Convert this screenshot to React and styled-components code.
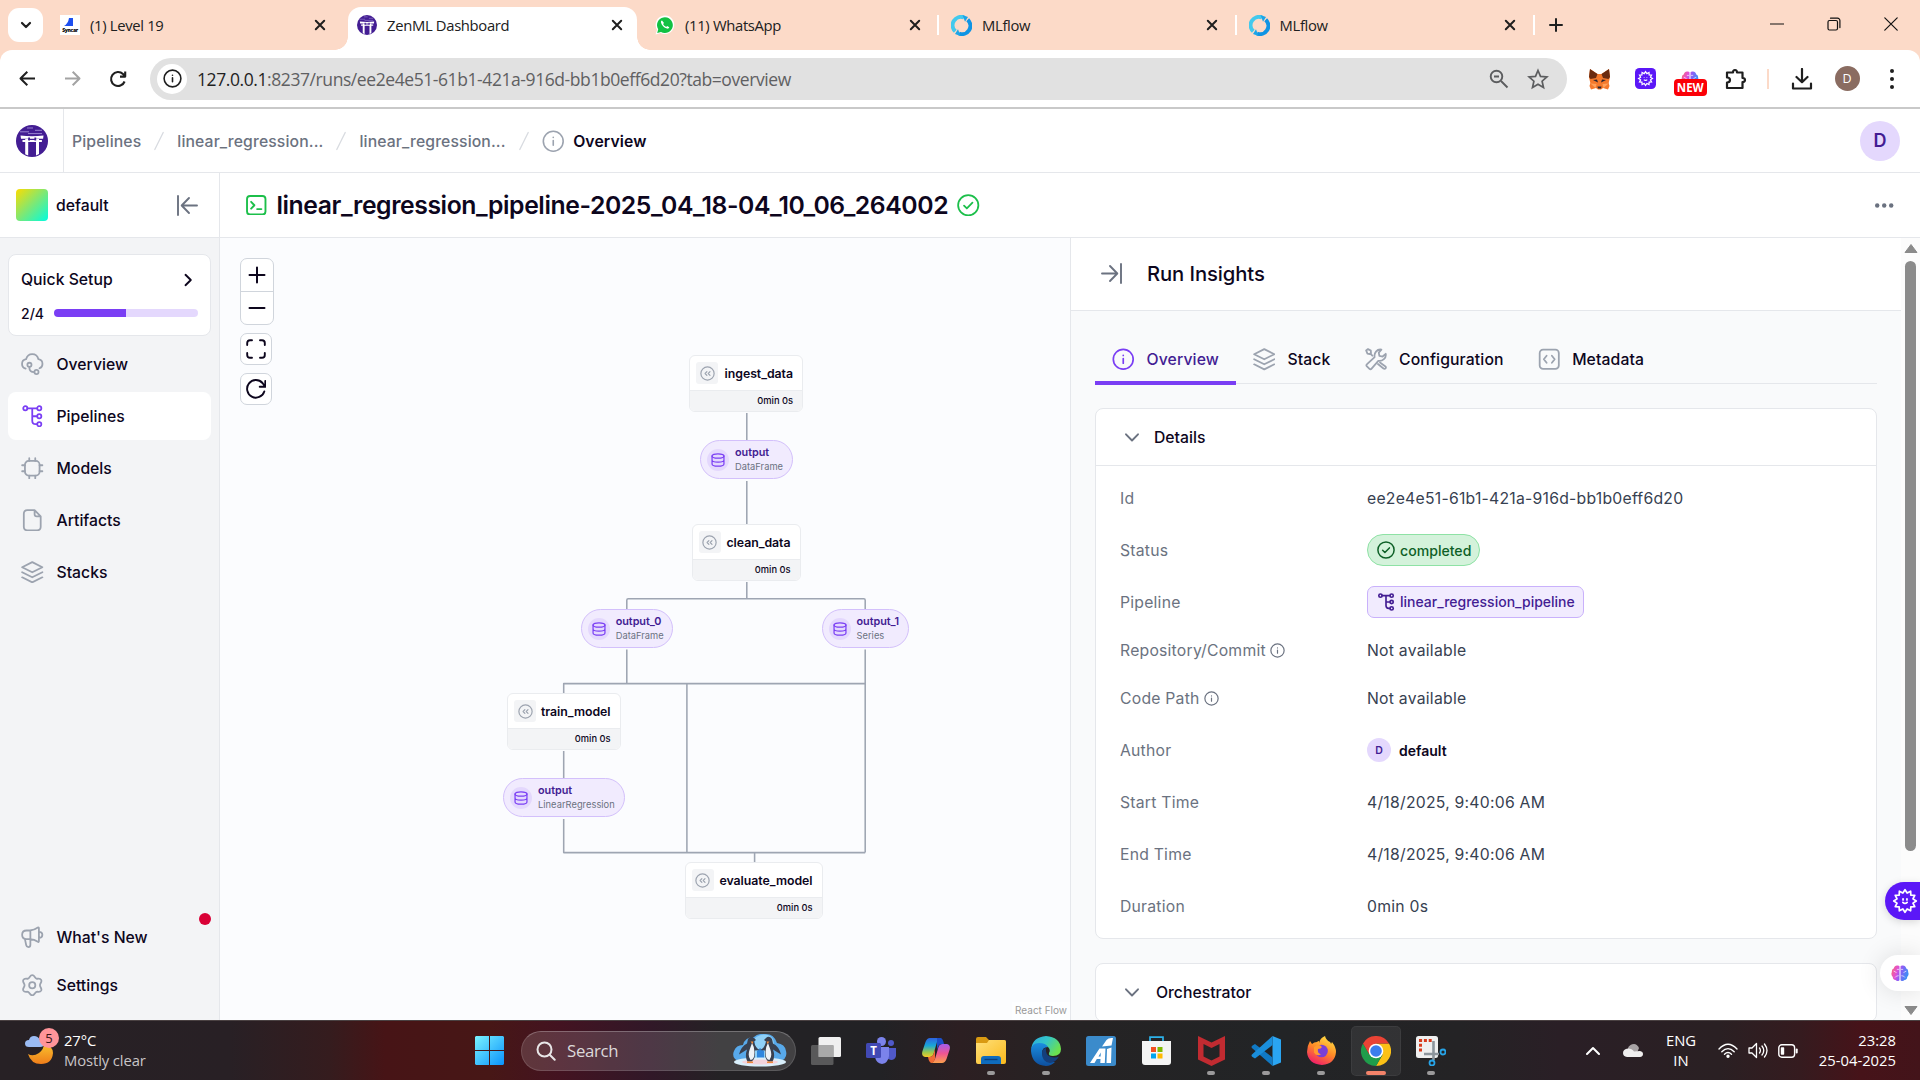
import React from 'react';
import styled, { createGlobalStyle, css } from 'styled-components';

const ui = `Inter, "Liberation Sans", sans-serif`;
const sys = `"Open Sans", "Noto Sans", sans-serif`;

const c = {
  ink: '#0d061d',
  text: '#374151',
  muted: '#6b7280',
  icon: '#9ca3af',
  line: '#e5e7eb',
  purple: '#7a3ef4',
  deep: '#431d93',
  lilac: '#e4d8fd',
  pale: '#f1ebfe',
  green: '#1cbf4a',
};

const Global = createGlobalStyle`
  *, *::before, *::after { box-sizing: border-box; }
  body { margin: 0; overflow: hidden; background: #fff; }
  svg { display: block; flex: none; }
`;

const Screen = styled.div`
  width: 1920px;
  height: 1080px;
  display: flex;
  flex-direction: column;
  overflow: hidden;
  font-family: ${ui};
  color: ${c.ink};
`;

/* ---------- Browser chrome ---------- */
const TabStrip = styled.div`
  height: 50px;
  flex: none;
  display: flex;
  background: #fcdac8;
  font-family: ${sys};
`;
const TabSearch = styled.div`
  width: 35px;
  height: 34px;
  margin: 8px 5px 0 8px;
  border-radius: 11px;
  background: #fff;
  display: grid;
  place-items: center;
`;
const Tab = styled.div`
  position: relative;
  width: ${(p) => p.$w || 297.5}px;
  height: 50px;
  padding: 0 0 0 ${(p) => p.$pad || 12}px;
  display: flex;
  align-items: center;
  font-size: 14.8px;
  letter-spacing: -0.32px;
  color: #202020;
  span { flex: 1; margin-left: 10px; white-space: nowrap; }
  ${(p) =>
    p.$active &&
    css`
      width: 289px;
      margin: 7px 0 0;
      height: 43px;
      padding: 0 0 7px 9px;
      background: #fff;
      border-radius: 13px 13px 0 0;
      &::before, &::after {
        content: '';
        position: absolute;
        bottom: 0;
        width: 13px;
        height: 13px;
      }
      &::before { left: -13px; background: radial-gradient(circle at 0 0, transparent 12.5px, #fff 13px); }
      &::after { right: -13px; background: radial-gradient(circle at 100% 0, transparent 12.5px, #fff 13px); }
    `}
`;
const TabClose = styled.div`
  width: 20px;
  height: 20px;
  margin-right: ${(p) => p.$r}px;
  display: grid;
  place-items: center;
`;
const TabSep = styled.div`
  width: 2px;
  height: 20px;
  margin: 15px 0 0 -2px;
  background: #fff;
`;
const NewTab = styled.div`
  width: 42px;
  display: grid;
  place-items: center;
`;
const WinButtons = styled.div`
  margin-left: auto;
  display: flex;
  padding-right: 1px;
  height: 48px;
`;
const WinButton = styled.div`
  width: 57px;
  display: grid;
  place-items: center;
`;

const ToolbarBack = styled.div`
  background: #fcdac8;
  flex: none;
`;
const Toolbar = styled.div`
  height: 59px;
  display: flex;
  align-items: center;
  background: #fff;
  border-radius: 12px 12px 0 0;
  border-bottom: 2px solid #c9c9c9;
  padding: 0 5px;
  font-family: ${sys};
`;
const ToolButton = styled.div`
  width: 45px;
  flex: none;
  display: grid;
  place-items: center;
`;
const AddressBar = styled.div`
  margin-left: 10px;
  width: 1417px;
  flex: none;
  height: 42px;
  border-radius: 21px;
  background: #e1e1e1;
  display: flex;
  align-items: center;
  padding: 0 18px 0 7px;
  gap: 18px;
`;
const SiteInfo = styled.div`
  width: 30px;
  height: 30px;
  border-radius: 50%;
  background: #fff;
  display: grid;
  place-items: center;
`;
const Url = styled.div`
  flex: 1;
  margin-left: -8px;
  font-size: 17.5px;
  letter-spacing: -0.42px;
  color: #5f6062;
  b { font-weight: 400; color: #1f1f1f; }
`;
const Extensions = styled.div`
  display: flex;
  align-items: center;
  margin-left: 10px;
`;
const NewBadge = styled.div`
  position: absolute;
  left: 6px;
  top: 22px;
  width: 33px;
  height: 17px;
  border-radius: 4px;
  background: #fb0007;
  color: #fff;
  font: 700 11.5px/17px ${sys};
  text-align: center;
`;
const ExtSlot = styled.div`
  position: relative;
  width: ${(p) => p.$w || 45.4}px;
  height: 44px;
  display: grid;
  place-items: center;
`;
const ToolDivider = styled.div`
  width: 2px;
  height: 20px;
  background: #fcdac8;
`;
const ProfileDot = styled.div`
  width: 25px;
  height: 25px;
  border-radius: 50%;
  background: #8a6c61;
  color: #fff;
  font-size: 12.5px;
  line-height: 25px;
  text-align: center;
`;

/* ---------- App header ---------- */
const AppHeader = styled.header`
  height: 64px;
  flex: none;
  display: flex;
  align-items: center;
  border-bottom: 1px solid ${c.line};
  background: #fff;
`;
const LogoCell = styled.div`
  width: 64px;
  height: 63px;
  border-right: 1px solid ${c.line};
  display: flex;
  align-items: center;
  padding-left: 16px;
`;
const Crumbs = styled.nav`
  display: flex;
  align-items: center;
  margin-left: 8px;
  padding-top: 1px;
  gap: 13px;
  font-size: 15.75px;
  font-weight: 500;
  letter-spacing: 0.12px;
  color: ${c.muted};
`;
const CurrentCrumb = styled.span`
  display: flex;
  align-items: center;
  gap: 9px;
  font-weight: 600;
  color: ${c.ink};
`;
const Avatar = styled.div`
  width: ${(p) => p.$size}px;
  height: ${(p) => p.$size}px;
  margin-left: ${(p) => (p.$push ? 'auto' : 0)};
  margin-right: ${(p) => (p.$push ? 20 : 0)}px;
  border-radius: 50%;
  background: ${c.lilac};
  color: ${c.deep};
  display: grid;
  place-items: center;
  font-size: ${(p) => p.$font}px;
  font-weight: 600;
`;

/* ---------- Body ---------- */
const Body = styled.div`
  height: 847px;
  flex: none;
  display: flex;
`;
const Sidebar = styled.aside`
  width: 220px;
  border-right: 1px solid ${c.line};
  background: #f3f4f6;
  display: flex;
  flex-direction: column;
`;
const Workspace = styled.div`
  height: 65px;
  background: #fff;
  border-bottom: 1px solid ${c.line};
  display: flex;
  align-items: center;
  padding: 0 21px 0 16px;
  font-size: 15.75px;
  font-weight: 500;
  span { flex: 1; margin-left: 8px; }
`;
const Swatch = styled.div`
  width: 32px;
  height: 32px;
  border-radius: 4px;
  background: linear-gradient(135deg, #fddc00 0%, #7ee874 50%, #00fce0 100%);
`;
const SetupCard = styled.div`
  margin: 16px 8px 4px;
  height: 82px;
  border: 1px solid ${c.line};
  border-radius: 8px;
  background: #fff;
  padding: 11px 12px 0;
  font-size: 15.75px;
  font-weight: 500;
`;
const SetupRow = styled.div`
  display: flex;
  align-items: center;
  justify-content: space-between;
  height: ${(p) => p.$h}px;
  padding-right: ${(p) => p.$pr || 0}px;
  margin-bottom: ${(p) => p.$mb || 0}px;
  font-size: ${(p) => p.$font || 15.75}px;
`;
const Progress = styled.div`
  width: 144px;
  height: 8px;
  border-radius: 4px;
  overflow: hidden;
  background: linear-gradient(90deg, ${c.purple} 50%, ${c.lilac} 50%);
`;
const NavList = styled.nav`
  display: flex;
  flex-direction: column;
  gap: 4px;
  padding: 0 8px;
`;
const NavItem = styled.div`
  position: relative;
  height: ${(p) => p.$h || 48}px;
  border-radius: 8px;
  display: flex;
  align-items: center;
  gap: 13px;
  padding-left: 13px;
  font-size: 15.75px;
  font-weight: 500;
  background: ${(p) => (p.$active ? '#fff' : 'transparent')};
  svg { color: ${(p) => (p.$active ? c.purple : c.icon)}; }
`;
const NavFoot = styled(NavList)`
  margin-top: auto;
  gap: 0;
  padding-bottom: 11px;
`;
const AlertDot = styled.i`
  position: absolute;
  right: 0;
  top: 0;
  width: 12px;
  height: 12px;
  border-radius: 50%;
  background: #d90036;
`;

const Main = styled.main`
  width: 1700px;
  display: flex;
  flex-direction: column;
`;
const TitleBar = styled.div`
  height: 65px;
  flex: none;
  display: flex;
  align-items: center;
  padding: 0 26px;
  border-bottom: 1px solid ${c.line};
  background: #fff;
`;
const Title = styled.h1`
  margin: -1px 9px 0 10px;
  font-size: 24.75px;
  line-height: 30px;
  font-weight: 600;
  letter-spacing: -0.42px;
`;
const Push = styled.div`
  margin-left: auto;
`;
const Split = styled.div`
  flex: 1;
  display: flex;
  min-height: 0;
`;

/* ---------- Pipeline canvas ---------- */
const Canvas = styled.section`
  position: relative;
  width: 850px;
  background: #fbfcfe;
  overflow: hidden;
`;
const Edges = styled.svg`
  position: absolute;
  inset: 0;
`;
const Controls = styled.div`
  position: absolute;
  left: 20px;
  top: 20px;
  display: flex;
  flex-direction: column;
  align-items: flex-start;
  gap: 8px;
`;
const ControlGroup = styled.div`
  border: 1px solid #d0d5dc;
  border-radius: 7px;
  background: #fff;
  overflow: hidden;
`;
const Control = styled.div`
  width: ${(p) => p.$s}px;
  height: ${(p) => p.$s}px;
  display: grid;
  place-items: center;
  & + & { border-top: 1px solid #d0d5dc; height: 33px; }
`;
const StepNode = styled.div`
  position: absolute;
  left: ${(p) => p.$x - 220}px;
  top: ${(p) => p.$y - 238}px;
  width: ${(p) => p.$w}px;
  height: 57px;
  border: 1px solid #eaecef;
  border-radius: 6px;
  background: #fff;
  overflow: hidden;
`;
const StepHead = styled.div`
  height: 35px;
  display: flex;
  align-items: center;
  padding: 0 9px 0 6px;
  justify-content: space-between;
  font-size: 12.3px;
  font-weight: 600;
  letter-spacing: -0.03px;
  border-bottom: 1px solid #eaecef;
`;
const StepIcon = styled.div`
  width: 22px;
  height: 22px;
  border-radius: 3px;
  background: #f3f4f6;
  display: grid;
  place-items: center;
`;
const StepTime = styled.div`
  height: 20px;
  background: #f3f4f6;
  padding-right: 9px;
  text-align: right;
  font-size: 9.3px;
  line-height: 20px;
  font-weight: 500;
`;
const ArtifactNode = styled.div`
  position: absolute;
  left: ${(p) => p.$x - 220}px;
  top: ${(p) => p.$y - 238}px;
  width: ${(p) => p.$w}px;
  height: 39px;
  border: 1px solid #d3c0fb;
  border-radius: 20px;
  background: ${c.pale};
  display: flex;
  align-items: center;
  gap: 6px;
  padding-left: 6px;
`;
const ArtifactIcon = styled.div`
  width: 22px;
  height: 22px;
  border-radius: 50%;
  background: ${c.lilac};
  color: ${c.purple};
  display: grid;
  place-items: center;
`;
const ArtifactText = styled.div`
  display: flex;
  flex-direction: column;
  font-size: 10.85px;
  line-height: 15px;
  font-weight: 600;
  letter-spacing: -0.04px;
  color: ${c.deep};
  margin-top: -1px;
  small { font-size: 9.3px; line-height: 14px; font-weight: 400; letter-spacing: 0.03px; color: ${c.muted}; }
`;
const Attribution = styled.div`
  position: absolute;
  right: 0;
  bottom: 0;
  padding: 2px 3px 4px;
  background: rgba(255, 255, 255, 0.5);
  font-size: 10px;
  line-height: 12px;
  color: #999;
`;

/* ---------- Insights panel ---------- */
const Panel = styled.section`
  width: 831px;
  border-left: 1px solid ${c.line};
  background: #f9fafb;
  overflow: hidden;
`;
const PanelHead = styled.div`
  height: 73px;
  background: #fff;
  border-bottom: 1px solid ${c.line};
  display: flex;
  align-items: center;
  gap: 25px;
  padding: 0 0 1px 30px;
  font-size: 20.25px;
  font-weight: 500;
  letter-spacing: -0.1px;
`;
const PanelTabs = styled.div`
  margin: 36px 24px 24px;
  height: 37px;
  border-bottom: 1px solid ${c.line};
  display: flex;
`;
const PanelTab = styled.div`
  height: 38px;
  display: flex;
  align-items: flex-start;
  gap: 12px;
  padding: 1px 17px 0;
  font-size: 15.75px;
  line-height: 24px;
  font-weight: 500;
  letter-spacing: 0.12px;
  color: ${(p) => (p.$active ? c.deep : c.ink)};
  border-bottom: 4px solid ${(p) => (p.$active ? c.purple : 'transparent')};
  svg { color: ${(p) => (p.$active ? c.purple : c.icon)}; }
`;
const Card = styled.div`
  margin: 0 24px 24px;
  border: 1px solid ${c.line};
  border-radius: 8px;
  background: #fff;
`;
const CardHead = styled.div`
  height: 57px;
  display: flex;
  align-items: center;
  gap: ${(p) => p.$gap || 14}px;
  padding-left: 28px;
  border-bottom: 1px solid ${c.line};
  font-size: 15.75px;
  font-weight: 500;
`;
const Fields = styled.dl`
  margin: 0;
  padding: 6px 0 6px 24px;
`;
const Field = styled.div`
  height: ${(p) => p.$h || 52}px;
  display: flex;
  align-items: center;
  font-size: 15.75px;
`;
const Label = styled.dt`
  width: 247px;
  display: flex;
  align-items: center;
  gap: 4px;
  letter-spacing: 0.22px;
  color: ${c.muted};
`;
const Value = styled.dd`
  margin: 0;
  display: flex;
  align-items: center;
  letter-spacing: 0.24px;
  color: ${c.text};
`;
const Status = styled.div`
  height: 32px;
  display: flex;
  align-items: center;
  gap: 5px;
  padding: 0 8px 0 9px;
  border: 1px solid #8ee2a5;
  border-radius: 16px;
  background: #d4f2db;
  color: #0e6027;
  font-size: 14.1px;
  font-weight: 500;
  letter-spacing: 0;
`;
const Chip = styled.div`
  height: 32px;
  display: flex;
  align-items: center;
  gap: 5px;
  padding: 0 8px 1px 9px;
  border: 1px solid #c9b1fb;
  border-radius: 7px;
  background: ${c.pale};
  color: ${c.deep};
  font-size: 14px;
  font-weight: 500;
  letter-spacing: 0;
`;
const Author = styled.div`
  display: flex;
  align-items: center;
  gap: 8px;
  font-size: 14px;
  font-weight: 600;
  letter-spacing: 0;
  color: ${c.ink};
`;
const Scrollbar = styled.div`
  width: 19px;
  background: #fcfcfc;
  display: flex;
  flex-direction: column;
  align-items: center;
  padding: 6px 0 5px;
`;
const Thumb = styled.div`
  width: 11px;
  height: 590px;
  margin: 8px 0 auto;
  border-radius: 6px;
  background: #8b8b8b;
`;
const Floating = styled.div`
  position: absolute;
  right: 0;
  top: ${(p) => p.$y}px;
  width: ${(p) => p.$w}px;
  height: ${(p) => p.$h}px;
  border-radius: 19px 0 0 19px;
  background: ${(p) => p.$bg};
  box-shadow: ${(p) => p.$shadow};
  display: flex;
  align-items: center;
  padding-left: ${(p) => p.$pad}px;
`;

/* ---------- Taskbar ---------- */
const Taskbar = styled.footer`
  position: relative;
  height: 60px;
  flex: none;
  display: flex;
  align-items: center;
  border-top: 1px solid #4a4142;
  background: linear-gradient(90deg, #272125 0, #282025 230px, #351c1e 330px, #471416 385px, #471716 490px, #431321 560px, #311828 650px, #242225 720px, #222225 880px, #2c1f22 960px, #252324 1080px, #222426 1280px, #242325 1460px, #2a1f26 1560px, #2a2023 1720px, #351b1f 1800px, #461319 1860px, #43141a 1920px);
  font-family: ${sys};
  color: #fff;
`;
const Weather = styled.div`
  position: relative;
  width: 450px;
  display: flex;
  align-items: center;
  padding-left: 24px;
  gap: 6px;
`;
const WeatherCount = styled.div`
  position: absolute;
  left: 39px;
  top: -3px;
  width: 20px;
  height: 20px;
  border-radius: 50%;
  background: #ff9499;
  color: #3a1518;
  font-size: 13px;
  line-height: 20px;
  text-align: center;
`;
const TwoLines = styled.div`
  font-size: 14.8px;
  line-height: 20.3px;
  letter-spacing: ${(p) => p.$ls || 0}px;
  text-align: ${(p) => p.$align || 'left'};
  white-space: nowrap;
  margin-top: -1px;
  span { display: block; color: ${(p) => p.$second || '#fff'}; }
`;
const StartSlot = styled.div`
  width: 71px;
  padding-left: 25px;
`;
const SearchBox = styled.div`
  width: 275px;
  height: 40px;
  border-radius: 20px;
  border: 1px solid rgba(255, 255, 255, 0.13);
  border-top-color: rgba(255, 255, 255, 0.26);
  background: rgba(255, 255, 255, 0.14);
  display: flex;
  align-items: center;
  padding: 0 8px 0 14px;
  font-size: 16.8px;
  color: #dcd9da;
  span { flex: 1; margin-left: 11px; letter-spacing: -0.3px; }
`;
const Apps = styled.div`
  display: flex;
  margin-left: 5px;
  gap: 5px;
`;
const AppSlot = styled.div`
  position: relative;
  width: 50px;
  height: 50px;
  border-radius: 5px;
  display: grid;
  place-items: center;
  ${(p) => p.$current && css`background: rgba(255, 255, 255, 0.07); box-shadow: inset 0 0 0 1px rgba(255, 255, 255, 0.05);`}
  ${(p) =>
    p.$open &&
    css`
      &::after {
        content: '';
        position: absolute;
        left: ${p.$current ? 15 : 21}px;
        bottom: 1px;
        width: ${p.$current ? 20 : 8}px;
        height: 4px;
        border-radius: 2px;
        background: ${p.$current ? '#f3836a' : '#9b9a9b'};
      }
    `}
`;
const Tray = styled.div`
  margin-left: auto;
  display: flex;
  align-items: center;
  padding-right: 24px;
`;
const TraySlot = styled.div`
  width: ${(p) => p.$w}px;
  display: grid;
  align-items: center;
  justify-items: ${(p) => (p.$end ? 'end' : 'center')};
`;

/* ---------- Icons ---------- */
const Line = ({ s = 22.5, w = 2, children, color = 'currentColor', vb = '0 0 24 24', h }) => (
  <svg width={s} height={h || s} viewBox={vb} fill="none" stroke={color} strokeWidth={w} strokeLinecap="round" strokeLinejoin="round">
    {children}
  </svg>
);
const InfoIcon = ({ s, w = 1.8, color }) => (
  <Line s={s} w={w} color={color}>
    <circle cx="12" cy="12" r="10.6" />
    <path d="M12 11.2v5M12 7.8v.1" />
  </Line>
);
const PipelineIcon = ({ s, w = 1.9 }) => (
  <Line s={s} w={w}>
    <circle cx="4.6" cy="3.5" r="2.2" />
    <circle cx="19.5" cy="3.5" r="2.2" />
    <circle cx="19.5" cy="12" r="2.2" />
    <circle cx="19.5" cy="20.5" r="2.2" />
    <path d="M6.8 3.5h10.5M12 3.5v13.3c0 2.6 1.1 3.7 3.7 3.7h1.6M12 12h5.3" />
  </Line>
);
const CloudIcon = () => (
  <Line w={1.9}>
    <path d="M5 16.6C2.6 15.9 1.1 14 1.1 11.6c0-2.6 1.8-4.6 4.3-5C6.3 3.5 8.9 1.3 12 1.3s5.8 2.2 6.6 5.3c2.5.4 4.3 2.4 4.3 5 0 2.2-1.3 4-3.2 4.700" />
    <circle cx="9" cy="12.6" r="2.2" />
    <circle cx="16.5" cy="20.3" r="2.2" />
    <path d="M9 14.8v1.400c0 2.800 1.300 4.100 5.300 4.100" />
  </Line>
);
const ChipIcon = () => (
  <Line w={1.9}>
    <rect x="4.2" y="4.2" width="15.6" height="15.6" rx="4" />
    <path d="M8.8 1.200v3M15.200 1.200v3M8.800 19.800v3M15.200 19.800v3M1.200 8.800h3M1.200 15.200h3M19.800 8.800h3M19.800 15.200h3" />
  </Line>
);
const FileIcon = () => (
  <Line w={1.9}>
    <path d="M14.500 1.300H6.800C4.100 1.300 3 2.400 3 5.100v13.800c0 2.700 1.100 3.800 3.800 3.800h10.400c2.700 0 3.800-1.100 3.800-3.800V7.800zM14.500 1.300v4.200c0 1.600.7 2.300 2.300 2.300H21" />
  </Line>
);
const LayersIcon = ({ w = 1.9, s }) => (
  <Line w={w} s={s}>
    <path d="M12 1.200 22.800 6.600 12 12 1.200 6.600zM1.200 12 12 17.400 22.800 12M1.200 17.400 12 22.800l10.800-5.400" />
  </Line>
);
const MegaphoneIcon = () => (
  <Line w={1.9}>
    <path d="M9.500 4.800H6c-3 0-4.800 1.800-4.800 4.600S3 14 6 14h3.500c3 .2 6 1.200 8.500 2.900.6.400 1.100.1 1.100-.6V2.300c0-.7-.5-1-1.100-.6-2.500 1.800-5.500 2.900-8.500 3.100zM10 4.800V20c0 1.600-.8 2.500-2.200 2.500-1.300 0-2-.8-2.300-2.200L4.200 14M19.200 6.200c2.300 0 3.600 1.200 3.600 3.200s-1.300 3.300-3.600 3.300" />
  </Line>
);
const GearIcon = () => (
  <Line w={1.9}>
    <circle cx="12" cy="12" r="3.3" />
    <path d="M12 1.200c2.500 0 2.600 3 4.500 3.700 1.600.6 3.700-.8 5 1.400 1.200 2.200-1.300 3.600-1.300 5.700s2.500 3.500 1.300 5.700c-1.300 2.200-3.400.8-5 1.400-1.900.7-2 3.700-4.500 3.700s-2.600-3-4.500-3.700c-1.600-.6-3.700.8-5-1.400C1.300 15.500 3.800 14.100 3.800 12S1.300 8.500 2.500 6.300c1.300-2.200 3.400-.8 5-1.400C9.400 4.200 9.500 1.200 12 1.200z" />
  </Line>
);
const ToolsIcon = () => (
  <Line w={1.9}>
    <path d="m4.800 22.300-3-3c-.5-.5-.5-1.300.1-1.800l8.400-7.800C9.300 5.500 12.700.9 17.500 1.700L14.700 5l.6 3.500 3.500.6 3.300-2.900c.9 4.600-3.400 8.200-7.900 7.500l-7.400 8.500c-.5.600-1.400.6-2 .1z" />
    <path d="M7.800 8.200 5.500 5.800M1.200 2.600l2-1.500 3 1.700.2 3-1.300.7-2.500-.6zM16 15.500l5.800 4.200c.7.600.7 1.500.1 2.100-.6.700-1.600.7-2.200 0L13.800 17" />
  </Line>
);
const CodeIcon = () => (
  <Line w={1.9}>
    <rect x="1.8" y="1.8" width="20.4" height="20.4" rx="3.6" />
    <path d="m9.200 8.300-3 3.700 3 3.700M14.800 8.300l3 3.700-3 3.700" />
  </Line>
);
const CheckIcon = ({ s = 22.5, color, w = 1.9 }) => (
  <Line s={s} color={color} w={w}>
    <circle cx="12" cy="12" r="10.8" />
    <path d="m7.500 12.400 3 3 6-6.200" />
  </Line>
);
const DatabaseIcon = () => (
  <Line s={14} w={1.4} vb="0 0 16 16">
    <ellipse cx="8" cy="3.400" rx="6.800" ry="2.500" />
    <path d="M1.200 3.400v9.200c0 1.400 3 2.500 6.800 2.500s6.800-1.100 6.800-2.500V3.400M1.200 8c0 1.400 3 2.500 6.800 2.500s6.800-1.100 6.800-2.500" />
  </Line>
);
const CachedIcon = () => (
  <Line s={15} w={1.9} color={c.icon}>
    <circle cx="12" cy="12" r="10.6" />
    <path d="m11 9-2.800 3 2.800 3M16 9l-2.800 3 2.800 3" />
  </Line>
);
const CloseIcon = () => (
  <Line s={12} w={2} color="#1f1f1f" vb="0 0 12 12"><path d="m1.800 1.800 8.400 8.400M10.200 1.800l-8.400 8.400" /></Line>
);
const Chevron = ({ d = 'down' }) => (
  <Line s={16} w={1.9} color={d === 'down' ? c.muted : c.ink} vb="0 0 16 16">
    <path d={d === 'down' ? 'M2 5.300 8 11.500 14 5.300' : 'M5.500 2.800 10.800 8l-5.300 5.200'} />
  </Line>
);
const ZenLogo = ({ s }) => (
  <svg width={s} height={s} viewBox="0 0 32 32">
    <circle cx="16" cy="16" r="16" fill="#431d93" />
    <path d="M4.500 10.500q11.500 1.500 23 0l-.4 3.200H5zM6.500 15h19.400v2H6.500zM9.200 14h3v16.500l-3-1.300zM20 14h3v15l-3 1.500z" fill="#fff" />
    <path d="M12.200 12.500h1.800v3h-1.800zM18.400 12.500h1.800v3h-1.800z" fill="#431d93" />
    <path d="M4 6.800h9M19 5.300h7M11 3h6M12 8.600h14" stroke="#a38fd6" strokeWidth=".9" />
  </svg>
);
const MlflowLogo = () => (
  <svg width="21" height="21" viewBox="0 0 21 21" fill="none" strokeWidth="4">
    <path d="M4.300 16.300A8.300 8.300 0 0 1 13 2.500" stroke="#43c9ed" />
    <path d="M16.700 4.700A8.300 8.300 0 0 1 8 18.500" stroke="#0f94e4" />
    <path d="m11.500 0 5.500 2-3 4.800zM9.500 21 4 19l3-4.800z" fill="#1ba5e8" />
  </svg>
);
const WhatsappLogo = () => (
  <svg width="20" height="20" viewBox="0 0 20 20">
    <path d="M.6 19.600 2 14.700A9.300 9.300 0 1 1 5.500 18z" fill="#fff" />
    <path d="m2.200 18 1-3.700a7.900 7.900 0 1 1 2.800 2.700z" fill="#12c143" />
    <path d="M7 5.500c-.8.300-1.200 1-1 2.100.6 2.900 3 5.400 6 6 1.200.2 2-.3 2.300-1.400l-2.200-1.300-1 1c-1.300-.5-2.300-1.500-3-2.800l.9-1z" fill="#fff" />
  </svg>
);
const SpeakerSiteLogo = () => (
  <svg width="20" height="20" viewBox="0 0 20 20">
    <path d="M0 0h20v20H0z" fill="#fff" />
    <path d="M9 3h4v8H4q2-1 3.500-3.500Q8.500 6 9 3z" fill="#1d4ff0" />
    <text x="10" y="16.500" textAnchor="middle" fontFamily="Open Sans" fontSize="5" fontWeight="800">Syncar</text>
  </svg>
);
const FoxIcon = () => (
  <svg width="21" height="22" viewBox="0 0 21 22">
    <path d="m1 1 7.500 5h4L20 1l1 8-1.300 6 .8 3-1.500 3.500-5-1.500-2 1.500H9L7 20l-5 1.500L.500 18l.8-3L0 9z" fill="#f5792c" />
    <path d="m1 1 7.500 5L7 10l-5.500 1L0 9zM20 1l-7.500 5L14 10l5.500 1L21 9z" fill="#6b2b10" />
    <path d="m4 12 4-.5 1 3zM17 12l-4-.5-1 3zM8.500 18.500h4l-.5 2H9z" fill="#2b2430" />
    <path d="m1.500 15.500 6 .5-1 4zM19.500 15.500l-6 .5 1 4z" fill="#ffa15a" />
  </svg>
);
const starburst = Array.from({ length: 24 }, (_, i) => {
  const r = i % 2 ? 7.6 : 10.4;
  const a = (i * Math.PI) / 12;
  return `${(12 + r * Math.sin(a)).toFixed(2)},${(12 - r * Math.cos(a)).toFixed(2)}`;
}).join(' ');
const BurstIcon = ({ s }) => (
  <svg width={s} height={s} viewBox="0 0 24 24" fill="none" stroke="#fff" strokeWidth="1.600" strokeLinejoin="round" strokeLinecap="round">
    <polygon points={starburst} />
    <path d="M10.200 10v1M13.800 10v1M10 13.300q2 2 4 0" />
  </svg>
);
const BrainIcon = ({ s }) => (
  <svg width={s} height={s} viewBox="0 0 20 20">
    <defs>
      <linearGradient id="brain" x1="0" y1="0" x2="1" y2="0.3">
        <stop offset="0" stopColor="#fb6a6a" /><stop offset=".4" stopColor="#e04fd8" /><stop offset=".6" stopColor="#8f5cf5" /><stop offset="1" stopColor="#3f8df5" />
      </linearGradient>
    </defs>
    <path d="M9.400 2.500v15.500Q7 20 5 17.800 2 17.500 2 14.500-.5 12 1 9q-.5-3 2-4 1-3.500 4-3.300 2-.1 2.400.8zM10.600 2.500v15.500Q13 20 15 17.800q3-.3 3-3.300 2.500-2.500 1-5.500.5-3-2-4-1-3.500-4-3.300-2-.1-2.400.8z" fill="url(#brain)" />
    <path d="M3 8q2 0 3 2M9 6H6.500M8.500 13q-3 0-4 2M17 8q-2 0-3 2M11 6h2.500M11.500 13q3 0 4 2" stroke="#fff" strokeWidth=".9" fill="none" opacity=".8" />
  </svg>
);

/* Taskbar icons */
const WindowsIcon = () => (
  <svg width="29" height="29" viewBox="0 0 29 29">
    <defs><linearGradient id="win" x1="0" y1="0" x2="29" y2="29" gradientUnits="userSpaceOnUse"><stop offset="0" stopColor="#7af3ff" /><stop offset="1" stopColor="#0a92fb" /></linearGradient></defs>
    <path d="M1 0h13v14H0V1zM15 0h13l1 1v13H15zM0 15h14v14H1l-1-1zM15 15h14v13l-1 1H15z" fill="url(#win)" />
  </svg>
);
const Penguins = () => (
  <svg width="54" height="33" viewBox="0 0 54 33">
    <path d="M6 28Q-2 24 1 17q2-6 9-6 2-8 11-8 4-4 12-3 8 0 11 9 8 1 9 8 2 8-7 11z" fill="#58a9ea" />
    <path d="M22 4q6-5 13-3 6 2 6 10l-8 15H22z" fill="#8fd0f7" />
    <path d="M24 17l3-3 4 3v7h-7z" fill="#2f86de" />
    <ellipse cx="27" cy="28" rx="26" ry="4.500" fill="#d9effb" />
    <ellipse cx="27" cy="28" rx="18" ry="2.500" fill="#f2d3dc" />
    <path d="M15 5q3-4 6-1l2 2-2 1.500q1.500 7 6 8.500l-5 .5q.5 9-3.500 11h-4q-3-5-.5-12l-8 5q2-8 8-11z" fill="#39404f" />
    <path d="M39 5q-3-4-6-1l-2 2 2 1.500q-1.500 7-6 8.500l5 .5q-.5 9 3.500 11h4q3-5 .5-12l8 5q-2-8-8-11z" fill="#39404f" />
    <path d="M19 9q2.500 4 2.500 9 0 8-4 8-3-4-1-10zM35 9q-2.500 4-2.500 9 0 8 4 8 3-4 1-10z" fill="#eef2f6" />
    <path d="M17.500 7.500l3 0-1 2.500zM36.500 7.500l-3 0 1 2.500zM14 27.500h6v1.500h-6zM34 27.500h6v1.500h-6z" fill="#ee8a3c" />
  </svg>
);
const TaskViewIcon = () => (
  <svg width="30" height="28" viewBox="0 0 30 28">
    <rect x="7.5" y="0" width="22.5" height="20" rx="1.500" fill="#f0f0f0" />
    <rect x="0" y="8" width="22.5" height="20" rx="1.500" fill="#6c6c6c" opacity=".75" />
    <path d="M7.500 8h15v12h-15z" fill="#a9a9a9" />
  </svg>
);
const TeamsIcon = () => (
  <svg width="30" height="27" viewBox="0 0 30 27">
    <circle cx="25" cy="6" r="3" fill="#5059c9" /><path d="M22 11h8v8q-1 4-5 4l-3-1z" fill="#5059c9" />
    <circle cx="15.500" cy="4.500" r="4.500" fill="#7b83eb" /><path d="M9 10h14v9q-1 7-7 8-6-1-7-7z" fill="#7b83eb" />
    <rect x="0" y="6" width="15" height="15" rx="1.500" fill="#4149b4" />
    <text x="7.500" y="17.500" fill="#fff" fontFamily="Open Sans" fontWeight="700" fontSize="11.500" textAnchor="middle">T</text>
  </svg>
);
const CopilotIcon = () => (
  <svg width="28" height="25" viewBox="0 0 28 25">
    <defs>
      <linearGradient id="cpa" x1="0" y1="0" x2="0" y2="1"><stop offset="0" stopColor="#2e62e0" /><stop offset=".4" stopColor="#18a6d8" /><stop offset=".75" stopColor="#9bc94d" /><stop offset="1" stopColor="#f5c928" /></linearGradient>
      <linearGradient id="cpb" x1="0" y1="0" x2="0" y2="1"><stop offset="0" stopColor="#a45cec" /><stop offset=".5" stopColor="#ee5593" /><stop offset="1" stopColor="#fba04c" /></linearGradient>
    </defs>
    <path d="M19 0q-3 1-4 4l-3.500 12q-1 3-4 3H3q-4-1-2.500-6l3-9Q5 0 8 0z" fill="url(#cpa)" />
    <path d="M9 25q3-1 4-4l3.500-12q1-3 4-3H25q4 1 2.500 6l-3 9q-1.500 4-4.500 4z" fill="url(#cpb)" />
    <path d="M15 0h4q2 1 3 6h-2q-3 0-4 3l-1 3z" fill="#1b4fc9" />
    <path d="M7.500 19q3 0 4-3l1.500-5v10q-1 3-3 4-3 0-4-6z" fill="#f06a35" />
  </svg>
);
const FolderIcon = () => (
  <svg width="30" height="27" viewBox="0 0 30 27">
    <path d="M0 2q0-2 2-2h8l3 3h15q2 0 2 2v8H0z" fill="#d99a12" />
    <defs><linearGradient id="fold" x1="0" y1="0" x2="1" y2="1"><stop offset="0" stopColor="#ffe07a" /><stop offset="1" stopColor="#fab91c" /></linearGradient></defs>
    <path d="M0 6h11l2-3h15q2 0 2 2v20q0 2-2 2H2q-2 0-2-2z" fill="url(#fold)" />
    <path d="M5 27v-5q0-3 3-3h14q3 0 3 3v5z" fill="#0f6cbd" /><path d="M8.500 22.500h13" stroke="#0a3f7c" strokeWidth="1.300" />
  </svg>
);
const EdgeIcon = () => (
  <svg width="30" height="30" viewBox="0 0 30 30">
    <defs>
      <linearGradient id="ed1" x1="0" y1="0" x2="1" y2=".5"><stop offset="0" stopColor="#2aa9e0" /><stop offset=".5" stopColor="#34c6c9" /><stop offset="1" stopColor="#6be04f" /></linearGradient>
      <linearGradient id="ed2" x1="0" y1="0" x2="0" y2="1"><stop offset="0" stopColor="#1b8ee0" /><stop offset="1" stopColor="#0d4f9e" /></linearGradient>
    </defs>
    <path d="M.3 12Q2 1 15 0q14 1 15 13 0 7-8 7-5 0-4-3 2-3-1-6-8-6-16.700 1z" fill="url(#ed1)" />
    <path d="M0 15q0-8 8-8 7 0 9 4-6 0-6 6 1 10 13 9-4 4-9 4Q1 29 0 15z" fill="url(#ed2)" />
    <path d="M11 17q0-4 4-5-1 7 5 9 4 1 8-.5Q24 27 19 27q-8-1-8-10z" fill="#143f7c" />
  </svg>
);
const AiIcon = () => (
  <svg width="30" height="30" viewBox="0 0 30 30">
    <rect width="30" height="30" rx="2.500" fill="#3b8bcb" />
    <path d="M4 27 13.500 12.500h6L18.800 27h-4.500l.2-4h-3.700l-2.300 4zM16 10.500l4.500-6.500q2-2.500 6.500-2l-1.500 7.500zM21 13l4.500-1.500L25 27h-4.500z" fill="#fff" />
    <path d="m14.800 16.500-2.300 4h2.100z" fill="#3b8bcb" />
  </svg>
);
const StoreIcon = () => (
  <svg width="29" height="29" viewBox="0 0 29 29">
    <path d="M8 6V1.200h13V6" fill="none" stroke="#2cb2ea" strokeWidth="1.700" />
    <path d="M0 5h29v21q0 3-3 3H3q-3 0-3-3z" fill="#f4f4f4" />
    <path d="M9 11h5v5H9z" fill="#f25022" /><path d="M15.500 11h5v5h-5z" fill="#7fba00" /><path d="M9 17.500h5v5H9z" fill="#00a4ef" /><path d="M15.500 17.500h5v5h-5z" fill="#ffb900" />
  </svg>
);
const McafeeIcon = () => (
  <svg width="27" height="30" viewBox="0 0 27 30">
    <path d="m0 0 13.500 6.500L27 0v23.500L13.500 30 0 23.500zM5.500 8v12.500l8 4 8-4V8l-8 4z" fill="#c12b31" fillRule="evenodd" />
  </svg>
);
const VscodeIcon = () => (
  <svg width="30" height="30" viewBox="0 0 30 30">
    <path d="M21.500 0 30 3.500v23L21.500 30z" fill="#2aa5f2" />
    <path d="m21.500 30-20-17.500q-2-1.500 0-3L4 8l17.500 13.500z" fill="#1079c4" /><path d="M21.500 0v9L4 22.500 1.500 21q-2-1.500 0-3z" fill="#1a8edb" />
  </svg>
);
const FirefoxIcon = () => (
  <svg width="29" height="29" viewBox="0 0 29 29">
    <defs><linearGradient id="ff" x1=".8" y1="0" x2=".3" y2="1"><stop offset="0" stopColor="#ffe545" /><stop offset=".5" stopColor="#ff8a26" /><stop offset="1" stopColor="#ef1a6b" /></linearGradient></defs>
    <path d="M3 5l2 3q2-2 5-2 1-1 2-1l0 2q1-5 6-7 1 4 5 6 1 1 1 2l1-2q4 5 4 10-1 12-14 13Q1 28 0 16 0 10 3 5z" fill="url(#ff)" />
    <circle cx="14.500" cy="15" r="6.300" fill="#7a3fd6" /><path d="M7 11q5-4 8 0-1 2-4 2-1 4 3 5.500-5 2-7-2z" fill="#ff9a2e" />
  </svg>
);
const ChromeIcon = () => (
  <svg width="30" height="30" viewBox="0 0 30 30">
    <path d="M15 7.500H28A15 15 0 0 1 15 30l6.500-11.200z" fill="#fbc116" />
    <path d="M2 7.500A15 15 0 0 0 15 30l6.500-11.200L15 15l-6.500 3.800z" fill="#1f9d4b" />
    <path d="M2 7.500A15 15 0 0 1 28 7.500H15L8.500 18.800z" fill="#ea4335" />
    <circle cx="15" cy="15" r="7.300" fill="#fff" /><circle cx="15" cy="15" r="5.800" fill="#3b7ded" />
  </svg>
);
const SnipIcon = () => (
  <svg width="30" height="30" viewBox="0 0 30 30">
    <rect width="22" height="22" rx="2.500" fill="#efefef" />
    <path d="M4.500 15.500V4.500h12" fill="none" stroke="#d83b1c" strokeWidth="3" strokeDasharray="3 1.800" />
    <path d="M17.500 5v19M8 18h15" stroke="#8d959c" strokeWidth="2.600" />
    <circle cx="16" cy="27" r="2.500" fill="none" stroke="#27a3e6" strokeWidth="1.800" /><circle cx="27" cy="16" r="2.500" fill="none" stroke="#27a3e6" strokeWidth="1.800" />
  </svg>
);

const steps = [
  { name: 'ingest_data', x: 689, y: 355, w: 114 },
  { name: 'clean_data', x: 691.5, y: 524, w: 109 },
  { name: 'train_model', x: 507, y: 693, w: 113.5 },
  { name: 'evaluate_model', x: 684.5, y: 862.3, w: 138 },
];
const artifacts = [
  { name: 'output', type: 'DataFrame', x: 700, y: 440, w: 92.5 },
  { name: 'output_0', type: 'DataFrame', x: 580.7, y: 609, w: 92.5 },
  { name: 'output_1', type: 'Series', x: 821.5, y: 609, w: 87.5 },
  { name: 'output', type: 'LinearRegression', x: 503, y: 778, w: 121.5 },
];
const nav = [
  ['Overview', CloudIcon],
  ['Pipelines', PipelineIcon],
  ['Models', ChipIcon],
  ['Artifacts', FileIcon],
  ['Stacks', LayersIcon],
];
const taskApps = [
  [TaskViewIcon], [TeamsIcon], [CopilotIcon], [FolderIcon, 1], [EdgeIcon, 1], [AiIcon], [StoreIcon],
  [McafeeIcon, 1], [VscodeIcon, 1], [FirefoxIcon, 1], [ChromeIcon, 1, 1], [SnipIcon, 1],
];
const Slash = () => <Line s={10} h={20} w={1.3} vb="0 0 10 20" color="#d8dbe0"><path d="M.8 18.500 9.200 1.500" /></Line>;

function BrowserChrome() {
  return (
    <>
      <TabStrip>
        <TabSearch><Line s={12} w={2.2} vb="0 0 12 12" color="#1f1f1f"><path d="m2 4 4 4 4-4" /></Line></TabSearch>
        <Tab $w={300}><SpeakerSiteLogo /><span>(1) Level 19</span><TabClose $r={18}><CloseIcon /></TabClose></Tab>
        <Tab $active><ZenLogo s={20} /><span>ZenML Dashboard</span><TabClose $r={10}><CloseIcon /></TabClose></Tab>
        <Tab $w={302} $pad={18}><WhatsappLogo /><span>(11) WhatsApp</span><TabClose $r={14}><CloseIcon /></TabClose></Tab>
        <TabSep />
        <Tab><MlflowLogo /><span>MLflow</span><TabClose $r={15}><CloseIcon /></TabClose></Tab>
        <TabSep />
        <Tab $w={298.5}><MlflowLogo /><span>MLflow</span><TabClose $r={15}><CloseIcon /></TabClose></Tab>
        <TabSep />
        <NewTab><Line s={14} w={2} vb="0 0 14 14" color="#1f1f1f"><path d="M7 1v12M1 7h12" /></Line></NewTab>
        <WinButtons>
          <WinButton><Line s={14} w={1.2} vb="0 0 14 14" color="#111"><path d="M0 7h14" /></Line></WinButton>
          <WinButton><Line s={14} w={1.2} vb="0 0 14 14" color="#111"><rect x="1" y="3.5" width="9.5" height="9.5" rx="1.5" /><path d="M3.500 1.200h7a2.400 2.400 0 0 1 2.400 2.400v7" /></Line></WinButton>
          <WinButton><Line s={14} w={1.2} vb="0 0 14 14" color="#111"><path d="M.8.8l12.400 12.400M13.200.8.8 13.200" /></Line></WinButton>
        </WinButtons>
      </TabStrip>
      <ToolbarBack>
        <Toolbar>
          <ToolButton><Line s={17} w={2} vb="0 0 17 17" color="#1f1f1f"><path d="M16 8.500H1.500M8.300 1.700 1.500 8.500l6.800 6.800" strokeLinecap="butt" /></Line></ToolButton>
          <ToolButton><Line s={17} w={2} vb="0 0 17 17" color="#a3a3a3"><path d="M1 8.500h14.500M8.700 1.700l6.800 6.800-6.800 6.800" strokeLinecap="butt" /></Line></ToolButton>
          <ToolButton><Line s={18} w={2.1} vb="0 0 18 18" color="#1f1f1f"><path d="M15.600 11.500A7 7 0 1 1 14 4l2 2M16.200 1.500V6.600H11" strokeLinecap="butt" /></Line></ToolButton>
          <AddressBar>
            <SiteInfo><InfoIcon s={19} w={2} color="#1f1f1f" /></SiteInfo>
            <Url><b>127.0.0.1</b>:8237/runs/ee2e4e51-61b1-421a-916d-bb1b0eff6d20?tab=overview</Url>
            <Line s={20} w={1.9} vb="0 0 20 20" color="#5c5d5f"><circle cx="7.5" cy="7.5" r="5.800" /><path d="m12 12 6.500 6.500M5 7.500h5" strokeLinecap="butt" /></Line>
            <Line s={22} w={1.7} vb="0 0 22 22" color="#5c5d5f"><path d="m11 2.500 2.500 5.900 6.400.6-4.800 4.200 1.400 6.300-5.500-3.300-5.500 3.300 1.400-6.300L2.100 9l6.400-.6z" strokeLinejoin="miter" /></Line>
          </AddressBar>
          <Extensions>
            <ExtSlot><FoxIcon /></ExtSlot>
            <ExtSlot><svg width="21" height="21" viewBox="0 0 21 21"><rect width="21" height="21" rx="4.500" fill="#5b17f7" /><g transform="translate(2.500 2.500) scale(.67)" fill="none" stroke="#fff" strokeWidth="1.800"><polygon points={starburst} /><path d="M10 10v1M14 10v1M9.500 13.500q2.500 2.600 5 0" /></g></svg></ExtSlot>
            <ExtSlot><BrainIcon s={18} /><NewBadge>NEW</NewBadge></ExtSlot>
            <ExtSlot><Line s={22} w={2.2} vb="0 0 22 22" color="#1f1f1f"><path d="M2 4.500h6q0-2.500 2-2.500t2 2.500h5.500V10q2.500 0 2.500 2t-2.500 2v6H2v-5.500q3 0 3-2.500t-3-2.500z" /></Line></ExtSlot>
            <ExtSlot $w={19}><ToolDivider /></ExtSlot>
            <ExtSlot $w={48}><Line s={22} w={2.2} vb="0 0 22 22" color="#1f1f1f"><path d="M11 1v13M5.500 9 11 14.200 16.500 9M2 15.500v5h18v-5" /></Line></ExtSlot>
            <ExtSlot $w={43}><ProfileDot>D</ProfileDot></ExtSlot>
            <ExtSlot $w={46}><svg width="6" height="22" fill="#1f1f1f"><circle cx="3" cy="3" r="2" /><circle cx="3" cy="11" r="2" /><circle cx="3" cy="19" r="2" /></svg></ExtSlot>
          </Extensions>
        </Toolbar>
      </ToolbarBack>
    </>
  );
}

function PipelineCanvas() {
  return (
    <Canvas>
      <Edges width="850" height="782" viewBox="220 238 850 782" fill="none" stroke="#9ea5b2" strokeWidth="1.55" strokeLinejoin="round">
        <path d="M746.800 413V440M746.800 481V524M746.800 582V598.800M626.800 609V600.200Q626.800 598.800 628.200 598.800H863.800Q865.200 598.800 865.200 600.200V609" />
        <path d="M626.800 649.500V683.600M865.200 649.500V852.600M563.700 694V683.600H865.200M686.900 683.600V852.600M563.700 751V778M563.700 819V852.600H865.200M754.600 852.600V863" />
      </Edges>
      {steps.map((n) => (
        <StepNode key={n.name} $x={n.x} $y={n.y} $w={n.w}>
          <StepHead><StepIcon><CachedIcon /></StepIcon>{n.name}</StepHead>
          <StepTime>0min 0s</StepTime>
        </StepNode>
      ))}
      {artifacts.map((n) => (
        <ArtifactNode key={n.x} $x={n.x} $y={n.y} $w={n.w}>
          <ArtifactIcon><DatabaseIcon /></ArtifactIcon>
          <ArtifactText>{n.name}<small>{n.type}</small></ArtifactText>
        </ArtifactNode>
      ))}
      <Controls>
        <ControlGroup>
          <Control $s={32}><Line s={18} w={2} vb="0 0 18 18" color={c.ink}><path d="M9 1.500v15M1.500 9h15" /></Line></Control>
          <Control $s={32}><Line s={18} w={2} vb="0 0 18 18" color={c.ink}><path d="M1.500 9h15" /></Line></Control>
        </ControlGroup>
        <ControlGroup><Control $s={30}><Line s={20} w={1.9} vb="0 0 20 20" color={c.ink}><path d="M1.200 6V4q0-2.800 2.800-2.800h2M14 1.200h2q2.800 0 2.800 2.800v2M18.800 14v2q0 2.800-2.800 2.800h-2M6 18.800H4q-2.800 0-2.800-2.800v-2" /></Line></Control></ControlGroup>
        <ControlGroup><Control $s={30}><Line s={20} w={1.9} vb="0 0 20 20" color={c.ink}><path d="M18.300 12.500A8.800 8.800 0 1 1 16.500 4l2.500 3.500M19.300 2v5.800h-5.600" /></Line></Control></ControlGroup>
      </Controls>
      <Attribution>React Flow</Attribution>
    </Canvas>
  );
}

function Insights() {
  return (
    <Panel>
      <PanelHead>
        <Line s={21} w={1.9} vb="0 0 21 21" color={c.muted}><path d="M1 10.500h15M9 3l7.300 7.500L9 18M20 1v19" /></Line>
        Run Insights
      </PanelHead>
      <PanelTabs>
        <PanelTab $active><InfoIcon />Overview</PanelTab>
        <PanelTab><LayersIcon />Stack</PanelTab>
        <PanelTab><ToolsIcon />Configuration</PanelTab>
        <PanelTab><CodeIcon />Metadata</PanelTab>
      </PanelTabs>
      <Card>
        <CardHead><Chevron />Details</CardHead>
        <Fields>
          <Field><Label>Id</Label><Value>ee2e4e51-61b1-421a-916d-bb1b0eff6d20</Value></Field>
          <Field><Label>Status</Label><Value><Status><CheckIcon s={18} w={2} />completed</Status></Value></Field>
          <Field><Label>Pipeline</Label><Value><Chip><PipelineIcon s={18} w={2.2} />linear_regression_pipeline</Chip></Value></Field>
          <Field $h={44}><Label>Repository/Commit<InfoIcon s={15} w={1.9} /></Label><Value>Not available</Value></Field>
          <Field><Label>Code Path<InfoIcon s={15} w={1.9} /></Label><Value>Not available</Value></Field>
          <Field><Label>Author</Label><Value><Author><Avatar $size={24} $font={10.5}>D</Avatar>default</Author></Value></Field>
          <Field><Label>Start Time</Label><Value>4/18/2025, 9:40:06 AM</Value></Field>
          <Field><Label>End Time</Label><Value>4/18/2025, 9:40:06 AM</Value></Field>
          <Field><Label>Duration</Label><Value>0min 0s</Value></Field>
        </Fields>
      </Card>
      <Card>
        <CardHead $gap={16}><Chevron />Orchestrator</CardHead>
      </Card>
    </Panel>
  );
}

export default function App() {
  return (
    <Screen>
      <Global />
      <BrowserChrome />
      <AppHeader>
        <LogoCell><ZenLogo s={32} /></LogoCell>
        <Crumbs>
          Pipelines<Slash />linear_regression...<Slash />linear_regression...<Slash />
          <CurrentCrumb><InfoIcon w={1.7} color={c.icon} />Overview</CurrentCrumb>
        </Crumbs>
        <Avatar $size={40} $font={18} $push>D</Avatar>
      </AppHeader>
      <Body>
        <Sidebar>
          <Workspace>
            <Swatch /><span>default</span>
            <Line s={21} w={1.9} vb="0 0 21 21" color={c.muted}><path d="M20 10.500H5M12 3l-7.300 7.500L12 18M1 1v19" /></Line>
          </Workspace>
          <SetupCard>
            <SetupRow $h={27} $mb={8} $pr={2}>Quick Setup<Chevron d="right" /></SetupRow>
            <SetupRow $h={24} $font={14}>2/4<Progress /></SetupRow>
          </SetupCard>
          <NavList>
            {nav.map(([label, Icon]) => (
              <NavItem key={label} $active={label === 'Pipelines'}><Icon />{label}</NavItem>
            ))}
          </NavList>
          <NavFoot>
            <NavItem><MegaphoneIcon />What's New<AlertDot /></NavItem>
            <NavItem><GearIcon />Settings</NavItem>
          </NavFoot>
        </Sidebar>
        <Main>
          <TitleBar>
            <Line s={20.5} w={2.2} color={c.green}><rect x="1.2" y="1.2" width="21.6" height="21.6" rx="3.6" /><path d="m6 8 3.800 4L6 16M13 16.500h5" /></Line>
            <Title>linear_regression_pipeline-2025_04_18-04_10_06_264002</Title>
            <CheckIcon color={c.green} />
            <Push><svg width="20" height="5" viewBox="0 0 20 5" fill={c.muted}><circle cx="3.2" cy="2.5" r="2.200" /><circle cx="10.2" cy="2.5" r="2.200" /><circle cx="17.2" cy="2.5" r="2.200" /></svg></Push>
          </TitleBar>
          <Split>
            <PipelineCanvas />
            <Insights />
            <Scrollbar>
              <svg width="14" height="9" viewBox="0 0 14 9"><path d="M7 .5 13 8.500H1z" fill="#8b8b8b" stroke="#8b8b8b" strokeLinejoin="round" /></svg>
              <Thumb />
              <svg width="14" height="9" viewBox="0 0 14 9"><path d="M7 8.500 13 .5H1z" fill="#8b8b8b" stroke="#8b8b8b" strokeLinejoin="round" /></svg>
            </Scrollbar>
          </Split>
        </Main>
      </Body>
      <Floating $y={882} $w={35} $h={38} $pad={7} $bg="#5b17f7" $shadow="0 2px 8px rgba(0,0,0,.15)"><BurstIcon s={26} /></Floating>
      <Floating $y={955} $w={40} $h={36} $pad={11} $bg="#fff" $shadow="0 0 24px rgba(0,0,0,.12)"><BrainIcon s={18} /></Floating>
      <Taskbar>
        <Weather>
          <svg width="34" height="30" viewBox="0 0 34 30">
            <defs><linearGradient id="moon" x1="0" y1="0" x2="0" y2="1"><stop offset="0" stopColor="#f9c22e" /><stop offset="1" stopColor="#ef7d1a" /></linearGradient></defs>
            <path d="M4 18q5 3 11-1 5-4 5-9 9 2 9 9-1 11-12 11Q7 28 4 18z" fill="url(#moon)" />
            <path d="M5 11q-4 0-4-3.500T5 4q1-4 5-4t6 4q4 1 4 4 0 3-4 3z" fill="#9bbcf4" />
          </svg>
          <WeatherCount>5</WeatherCount>
          <TwoLines $second="#c9c5c7" $ls={-0.1}>27°C<span>Mostly clear</span></TwoLines>
        </Weather>
        <StartSlot><WindowsIcon /></StartSlot>
        <SearchBox>
          <Line s={20} w={2} vb="0 0 20 20" color="#e8e6e7"><circle cx="8.5" cy="8.5" r="7" /><path d="m13.700 13.700 5 5" /></Line>
          <span>Search</span><Penguins />
        </SearchBox>
        <Apps>
          {taskApps.map(([Icon, open, current], i) => (
            <AppSlot key={i} $open={open} $current={current}><Icon /></AppSlot>
          ))}
        </Apps>
        <Tray>
          <TraySlot $w={40}><Line s={14} w={2} vb="0 0 14 14" color="#fff"><path d="M1 10l6-6 6 6" /></Line></TraySlot>
          <TraySlot $w={40}><svg width="20" height="13" viewBox="0 0 20 13"><path d="M5 4q2-4 6-4 3 0 5 4l-2 5H5z" fill="#a8a3a5" /><path d="M4 13q-4-.5-4-4 0-4 5-4.500 4 0 6 3l6-.5q3 .5 3 3T17 13z" fill="#efeeee" /></svg></TraySlot>
          <TraySlot $w={56}><TwoLines $align="center">ENG<span>IN</span></TwoLines></TraySlot>
          <TraySlot $w={38}><Line s={20} h={15} w={1.4} vb="0 0 20 15" color="#fff"><path d="M1 6q9-9.500 18 0M3.800 8.800q6.200-6.400 12.400 0M6.500 11.300q3.500-3.400 7 0" /><circle cx="10" cy="13.300" r="1" fill="#fff" /></Line></TraySlot>
          <TraySlot $w={22}><Line s={20} h={17} w={1.3} vb="0 0 20 17" color="#fff"><path d="M1 6h3l4.500-4.500v14L4 11H1zM11.500 6q1.800 2.500 0 5M14 4q3.500 4.500 0 9M16.500 2q5 6.500 0 13" /></Line></TraySlot>
          <TraySlot $w={38}><Line s={20} h={14} w={1.4} vb="0 0 20 14" color="#fff"><rect x=".8" y=".8" width="15.8" height="12.4" rx="3" /><path d="M3.500 4h2v6h-2z" fill="#fff" /><path d="M18.700 5.500v3" strokeWidth="2" /></Line></TraySlot>
          <TraySlot $w={89} $end><TwoLines $align="right">23:28<span>25-04-2025</span></TwoLines></TraySlot>
        </Tray>
      </Taskbar>
    </Screen>
  );
}
